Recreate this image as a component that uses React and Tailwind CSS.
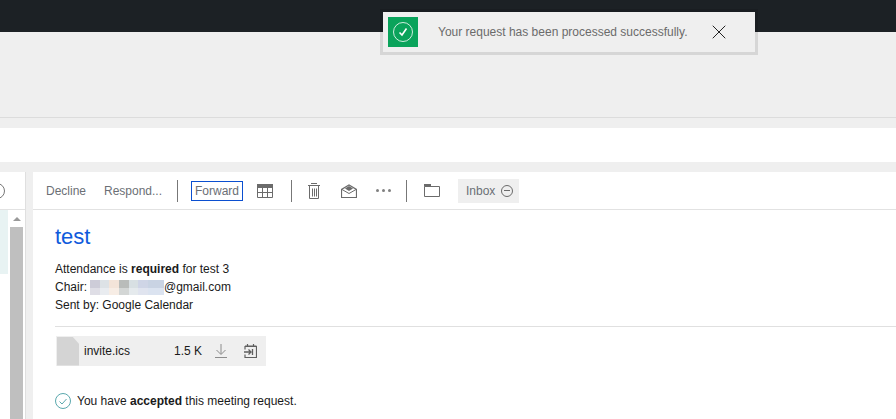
import { X } from 'lucide-react';

const iconColor = '#6b6b6b';

// blurred address in the screenshot: [width, top colour, bottom colour]
const blurCells = [
  [10, '#cdccd8', '#dfdee6'],
  [9, '#dde2e6', '#e9ecf0'],
  [10, '#f3e4d9', '#f7ede5'],
  [10, '#b9bcba', '#d3d6d5'],
  [9, '#d8e0e3', '#e5eaed'],
  [10, '#cfd5e6', '#e0e4ef'],
  [16, '#c9d3e3', '#dbe3f0'],
];

function Separator() {
  return <div className="h-[22px] w-[1px] bg-[#777]" />;
}

function TableIcon() {
  return (
    <svg width="16" height="14" viewBox="0 0 16 14" fill="none">
      <rect x="0" y="0" width="16" height="4" fill={iconColor} />
      <path d="M.5 4v9.5h15V4M5.5 4v9.5M10.5 4v9.5M.5 8.5h15" stroke={iconColor} />
    </svg>
  );
}

function TrashIcon() {
  return (
    <svg width="12" height="16" viewBox="0 0 12 16" fill="none" stroke={iconColor}>
      <path d="M3 .5h6M0 2.5h12M1.5 3v12.5h9V3M4.5 5.5v8M6.5 5.5v8M8.5 5.5v8" />
    </svg>
  );
}

function MailOpenIcon() {
  return (
    <svg width="16" height="14" viewBox="0 0 16 14" fill="none" stroke={iconColor}>
      <path d="M.5 5.5v8h15v-8L8 1z" strokeWidth="1.2" />
      <path d="M1 5.5 8 9.5l7-4" />
      <path d="M4 4.5 8 2l4 2.5L8 7z" fill={iconColor} stroke="none" />
    </svg>
  );
}

function FolderIcon() {
  return (
    <svg width="16" height="13" viewBox="0 0 16 13" fill="none" stroke={iconColor}>
      <path d="M.5 2.5h15v10H.5z" />
      <path d="M0 0h7v2.5H0z" fill={iconColor} stroke="none" />
    </svg>
  );
}

function DownloadIcon() {
  return (
    <svg width="14" height="14" viewBox="0 0 14 14" fill="none" stroke="#8c8c8c">
      <path d="M7 0v10M2.5 6 7 10.5 11.5 6M1 13.5h12" />
    </svg>
  );
}

function CalendarIcon() {
  return (
    <svg width="13" height="14" viewBox="0 0 13 14" fill="none" stroke="#5f5f5f">
      <path d="M1 5.5V2.5h11.5v11H1V10.5M3.5 0v3M9.5 0v3M1 2h11.5" strokeWidth="1.2" />
      <path d="M0 8h7M4.5 5.5 7 8 4.5 10.5M8.5 5v6" strokeWidth="1.3" />
    </svg>
  );
}

export default function App() {
  return (
    <div className="relative h-[419px] w-[896px] overflow-hidden bg-[#efefef] font-['Liberation_Sans',Arial,sans-serif] text-xs text-[#1a1a1a]">
      <div className="h-8 bg-[#1c2125]" />
      <div className="h-[86px] border-b border-[#dcdcdc]" />
      <div className="h-[10px]" />
      <div className="h-[34px] bg-white" />
      <div className="h-[10px]" />

      <div className="flex h-[247px]">
        {/* message list edge */}
        <div className="flex w-[26px] flex-col border-r border-[#dfdfdf] bg-white">
          <div className="flex h-[38px] items-center border-b border-[#e2e2e2]">
            <div className="ml-[-11px] h-4 w-4 rounded-full border border-[#777]" />
          </div>
          <div className="flex flex-1">
            <div className="h-[64px] w-2 bg-[#e8f3f3]" />
            <div className="ml-[2px] flex w-[13px] flex-col">
              <div className="flex h-[17px] items-center justify-center">
                <div className="h-0 w-0 border-x-4 border-b-4 border-x-transparent border-b-[#999]" />
              </div>
              <div className="flex-1 bg-[#bfbfbf]" />
            </div>
          </div>
        </div>

        <div className="w-[7px]" />

        {/* reading pane */}
        <div className="flex-1 bg-white">
          <div className="flex h-[38px] items-center border-b border-[#e2e2e2] pl-[13px] text-[#6b6f75]">
            <span className="w-[58px]">Decline</span>
            <span className="w-[73px]">Respond...</span>
            <Separator />
            <span className="ml-[13px] flex h-5 w-[52px] items-center justify-center border border-[#0b4fd0]">Forward</span>
            <span className="ml-[14px]"><TableIcon /></span>
            <span className="ml-[18px]"><Separator /></span>
            <span className="ml-4"><TrashIcon /></span>
            <span className="ml-[21px]"><MailOpenIcon /></span>
            <span className="ml-[19px] flex gap-[3px]">
              <i className="h-[3px] w-[3px] rounded-full bg-[#808080]" />
              <i className="h-[3px] w-[3px] rounded-full bg-[#808080]" />
              <i className="h-[3px] w-[3px] rounded-full bg-[#808080]" />
            </span>
            <span className="ml-[15px]"><Separator /></span>
            <span className="ml-[17px]"><FolderIcon /></span>
            <span className="ml-[18px] flex h-6 w-[61px] items-center gap-[6px] bg-[#efefef] pl-2">
              Inbox
              <span className="flex h-3 w-3 items-center justify-center rounded-full border border-[#6b6b6b]">
                <i className="h-[1px] w-[6px] bg-[#6b6b6b]" />
              </span>
            </span>
          </div>

          <div className="pl-[22px] pt-[14px]">
            <h1 className="text-[22px] leading-[26px] text-[#0f5bdc]">test</h1>
            <div className="mt-[10px] leading-[18px]">
              <p>Attendance is <b>required</b> for test 3</p>
              <p className="flex items-center">
                Chair:
                <span className="ml-[3px] flex h-[15px] w-[74px] overflow-hidden">
                  {blurCells.map(([width, top, bottom], index) => (
                    <i
                      key={index}
                      className="block h-full"
                      style={{ width, background: `linear-gradient(${top} 50%, ${bottom} 50%)` }}
                    />
                  ))}
                </span>
                @gmail.com
              </p>
              <p>Sent by: Google Calendar</p>
            </div>
            <div className="mt-3 h-[1px] bg-[#e0e0e0]" />

            <div className="ml-px mt-[9px] flex h-[30px] w-[210px] items-center bg-[#efefef]">
              <div
                className="ml-px h-[29px] w-[22px] bg-[#d4d4d4] [clip-path:polygon(0_0,70%_0,100%_25%,100%_100%,0_100%)]"
              />
              <span className="ml-[5px] w-[90px]">invite.ics</span>
              <span className="w-[40px]">1.5 K</span>
              <DownloadIcon />
              <span className="ml-[16px]"><CalendarIcon /></span>
            </div>

            <div className="mt-[27px] flex items-center gap-[6px]">
              <svg width="16" height="16" viewBox="0 0 16 16" fill="none" stroke="#5aa8ad">
                <circle cx="8" cy="8" r="7.5" />
                <path d="M4.5 8.5 7 11l4.5-5" />
              </svg>
              <span>You have <b>accepted</b> this meeting request.</span>
            </div>
          </div>
        </div>
      </div>

      {/* success toast */}
      <div className="absolute left-[383px] top-3 flex h-10 w-[372px] items-center bg-[#efefef] pl-[5px] shadow-[0_0_0_3px_rgba(0,0,0,0.1)]">
        <div className="flex h-[30px] w-[30px] items-center justify-center bg-[#0aa35b]">
          <svg width="20" height="20" viewBox="0 0 20 20" fill="none" stroke="white">
            <circle cx="10" cy="10" r="9.5" strokeOpacity="0.8" />
            <path d="M6.5 10.5 9 13l4.5-6.5" strokeWidth="1.6" />
          </svg>
        </div>
        <span className="ml-5 w-[269px] text-[#6b6b6b]">Your request has been processed successfully.</span>
        <X size={24} strokeWidth={1} color="#222" />
      </div>
    </div>
  );
}
